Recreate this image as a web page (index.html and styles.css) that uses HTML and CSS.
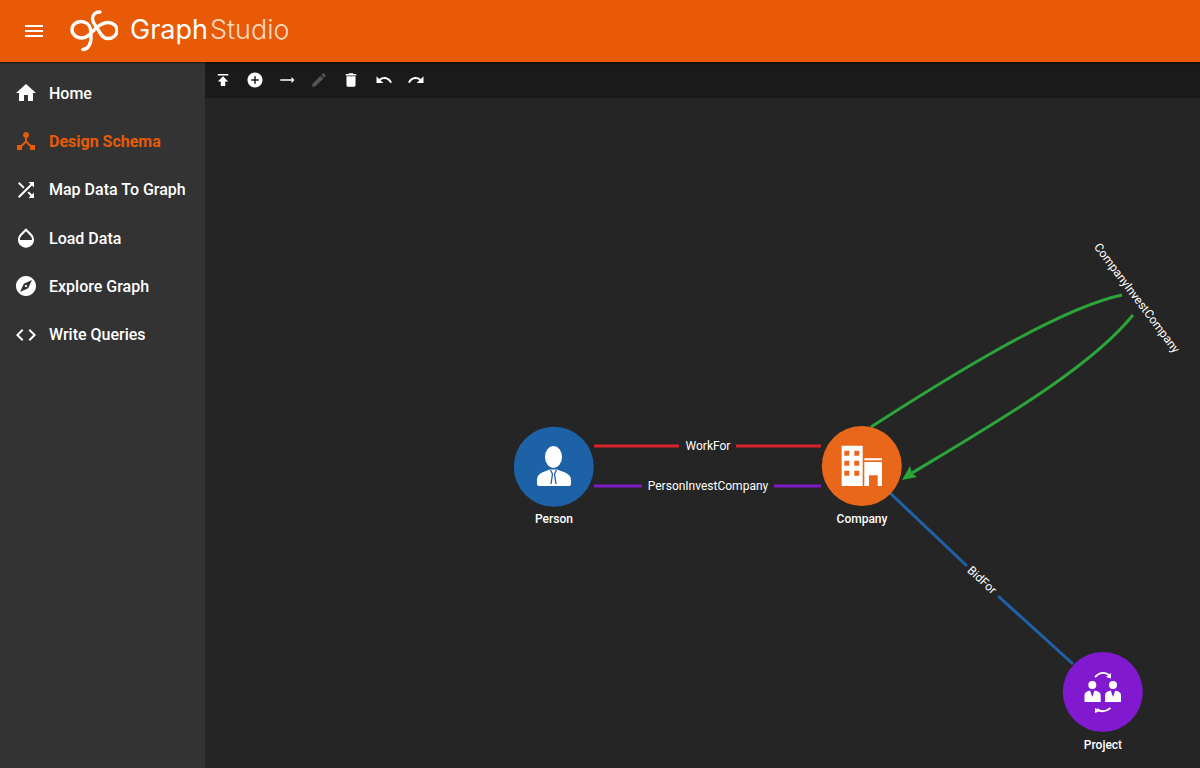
FILE: index.html
```html
<!DOCTYPE html>
<html lang="en">
<head>
    <meta charset="UTF-8">
    <meta name="viewport" content="width=device-width, initial-scale=1.0">
    <title>GraphStudio</title>
    <link rel="stylesheet" href="styles.css">
</head>
<body>
    <header class="topbar">
        <svg class="menu-icon" viewBox="0 0 24 24"><path d="M3 18h18v-2H3v2zm0-5h18v-2H3v2zm0-7v2h18V6H3z"/></svg>
        <svg class="logo" viewBox="70 8 48 42">
            <path d="M100 10C95 10 92.500 13 92.500 16.500C92.500 21 96 24 99 29C101 33 103 36.500 108 36.500C113 36.500 117 33 117 28.500C117 24 113 20.500 108 20.500C102 20.500 98 24 94 28C90 32 87 36 81.500 36C76 36 72 32 72 27.500C72 23 76 19.500 81 19.500C86 19.500 90 23 90.500 27C91 31 91.500 36 90.500 40C89.500 44 87 47 83 47.500"/>
        </svg>
        <div class="brand"><span class="brand-graph">Graph</span><span class="brand-studio">Studio</span></div>
    </header>
    <div class="layout">
        <nav class="sidenav">
            <a class="nav-item">
                <svg viewBox="0 0 24 24"><path d="M10 20v-6h4v6h5v-8h3L12 3 2 12h3v8z"/></svg>
                <span>Home</span>
            </a>
            <a class="nav-item active">
                <svg viewBox="0 0 24 24"><path d="M17 16l-4-4V8.82C14.16 8.4 15 7.3 15 6c0-1.66-1.34-3-3-3S9 4.34 9 6c0 1.3.84 2.4 2 2.82V12l-4 4H3v5h5v-3.05l4-4.2 4 4.2V21h5v-5h-4z"/></svg>
                <span>Design Schema</span>
            </a>
            <a class="nav-item">
                <svg viewBox="0 0 24 24"><path d="M10.59 9.17L5.41 4 4 5.41l5.17 5.17 1.42-1.41zM14.5 4l2.04 2.04L4 18.59 5.41 20 17.96 7.46 20 9.5V4h-5.5zm.33 9.41l-1.41 1.41 3.13 3.13L14.5 20H20v-5.5l-2.04 2.04-3.13-3.13z"/></svg>
                <span>Map Data To Graph</span>
            </a>
            <a class="nav-item">
                <svg viewBox="0 0 24 24"><path d="M17.66 8L12 2.35 6.34 8C4.78 9.56 4 11.64 4 13.64s.78 4.11 2.34 5.67 3.61 2.35 5.66 2.35 4.1-.79 5.66-2.35S20 15.64 20 13.64 19.22 9.56 17.66 8zM6 14c.01-2 .62-3.27 1.76-4.4L12 5.27l4.24 4.38C17.38 10.77 17.99 12 18 14H6z"/></svg>
                <span>Load Data</span>
            </a>
            <a class="nav-item">
                <svg viewBox="0 0 24 24"><path d="M12 10.9c-.61 0-1.1.49-1.1 1.1s.49 1.1 1.1 1.1c.61 0 1.1-.49 1.1-1.1s-.49-1.1-1.1-1.1zM12 2C6.48 2 2 6.48 2 12s4.48 10 10 10 10-4.48 10-10S17.52 2 12 2zm2.19 12.19L6 18l3.81-8.19L18 6l-3.81 8.19z"/></svg>
                <span>Explore Graph</span>
            </a>
            <a class="nav-item">
                <svg viewBox="0 0 24 24"><path d="M9.4 16.6L4.8 12l4.6-4.6L8 6l-6 6 6 6 1.4-1.4zm5.2 0l4.6-4.6-4.6-4.6L16 6l6 6-6 6-1.4-1.4z"/></svg>
                <span>Write Queries</span>
            </a>
        </nav>
        <main class="workspace">
            <div class="toolbar">
                <button class="tool"><svg viewBox="0 0 24 24"><path d="M5 4v2h14V4H5zm0 10h4v6h6v-6h4l-7-7-7 7z"/></svg></button>
                <button class="tool"><svg viewBox="0 0 24 24"><path d="M12 2C6.48 2 2 6.48 2 12s4.48 10 10 10 10-4.48 10-10S17.52 2 12 2zm5 11h-4v4h-2v-4H7v-2h4V7h2v4h4v2z"/></svg></button>
                <button class="tool"><svg viewBox="0 0 24 24"><path d="M22 12l-4-4v3H3v2h15v3z"/></svg></button>
                <button class="tool disabled"><svg viewBox="0 0 24 24"><path d="M3 17.25V21h3.75L17.81 9.94l-3.75-3.75L3 17.25zM20.71 7.04c.39-.39.39-1.02 0-1.41l-2.34-2.34c-.39-.39-1.02-.39-1.41 0l-1.83 1.83 3.75 3.75 1.83-1.83z"/></svg></button>
                <button class="tool"><svg viewBox="0 0 24 24"><path d="M6 19c0 1.1.9 2 2 2h8c1.1 0 2-.9 2-2V7H6v12zM19 4h-3.5l-1-1h-5l-1 1H5v2h14V4z"/></svg></button>
                <button class="tool"><svg viewBox="0 0 24 24"><path d="M12.5 8c-2.65 0-5.05.99-6.9 2.6L2 7v9h9l-3.62-3.62c1.39-1.16 3.16-1.88 5.12-1.88 3.54 0 6.55 2.31 7.6 5.5l2.37-.78C21.08 11.03 17.15 8 12.5 8z"/></svg></button>
                <button class="tool"><svg viewBox="0 0 24 24"><path d="M18.4 10.6C16.55 8.99 14.15 8 11.5 8c-4.65 0-8.58 3.03-9.96 7.22L3.9 16c1.05-3.19 4.05-5.5 7.6-5.5 1.95 0 3.73.72 5.12 1.88L13 16h9V7l-3.6 3.6z"/></svg></button>
            </div>
            <!-- viewBox uses page coordinates so the node positions read directly -->
            <svg class="graph" viewBox="205 98 995 670">
                <path class="edge edge-red" d="M594 446H679M736 446H821"/>
                <path class="edge edge-purple" d="M594 486H642M774 486H821"/>
                <path class="edge edge-blue" d="M890 493L967 566M998 596L1073 664"/>
                <path class="edge edge-green" d="M871 427C950 376 1060 308 1122 295"/>
                <path class="edge edge-green" d="M1133 315C1090 368 1000 420 912 473"/>
                <polygon class="arrow-green" points="902,480 910,466 912,473 917,477"/>

                <text class="edge-label" x="708" y="450">WorkFor</text>
                <text class="edge-label" x="708" y="490">PersonInvestCompany</text>
                <text class="edge-label" transform="translate(982 580) rotate(43)" y="4">BidFor</text>
                <text class="edge-label" transform="translate(1137 298) rotate(53)" y="4">CompanyInvestCompany</text>

                <g>
                    <circle class="node-blue" cx="553.800" cy="466.800" r="40"/>
                    <ellipse class="glyph" cx="553.500" cy="457" rx="8.500" ry="11"/>
                    <path class="glyph" d="M537 480C537 475 540 473 546 471L550 469.500H557L561 471C567 473 571 475 571 480V484Q571 486 568 486H540Q537 486 537 484Z"/>
                    <path class="tie-lines" d="M550.500 470L552.500 474L551 484M556.500 470L554.500 474L556 484"/>
                    <text class="node-label" x="554" y="523">Person</text>
                </g>
                <g>
                    <circle class="node-orange" cx="861.800" cy="466" r="40"/>
                    <path class="glyph" d="M841.700 445.700H862.700V486H841.700ZM844.300 450.700V455.700H849.300V450.700ZM854.300 450.700V455.700H859.300V450.700ZM844.300 460.700V465.700H849.300V460.700ZM854.300 460.700V465.700H859.300V460.700ZM844.300 470.700V475.700H849.300V470.700ZM854.300 470.700V475.700H859.300V470.700Z" fill-rule="evenodd"/>
                    <path class="glyph" d="M864.300 458.300H882V460.300H864.300ZM864.300 462H882V486H877.700V475.300H869V486H864.300Z"/>
                    <text class="node-label" x="862" y="523">Company</text>
                </g>
                <g>
                    <circle class="node-purple" cx="1102.800" cy="692" r="40"/>
                    <circle class="glyph" cx="1092.300" cy="685" r="4"/>
                    <circle class="glyph" cx="1113" cy="685" r="4"/>
                    <path class="glyph" d="M1084.500 702V695Q1084.500 692.500 1087 691.500L1090 690.500L1092.300 697L1094.500 690.500L1098 691.500Q1100.700 692.500 1100.700 695V702Z"/>
                    <path class="glyph" d="M1105 702V695Q1105 692.500 1107.500 691.500L1110.800 690.500L1113 697L1115.200 690.500L1118.500 691.500Q1121 692.500 1121 695V702Z"/>
                    <path class="arc" d="M1095 677Q1102 670 1109 675"/>
                    <path class="arc" d="M1110.500 708Q1103 714 1097 709"/>
                    <polygon class="glyph" points="1111,673 1111,678.500 1106,677"/>
                    <polygon class="glyph" points="1095,708 1095,713 1100,711"/>
                    <text class="node-label" x="1103" y="749">Project</text>
                </g>
            </svg>
        </main>
    </div>
</body>
</html>
```

FILE: styles.css
```css
html, body {
    height: 100%;
}
body {
    margin: 0;
    display: flex;
    flex-direction: column;
    overflow: hidden;
    font-family: Roboto, sans-serif;
    background-color: #252525;
    color: #fff;
}
.topbar {
    height: 62px;
    flex: none;
    display: flex;
    align-items: center;
    padding-left: 22px;
    background-color: #e85a06;
    box-shadow: 0 1px 2px rgba(0, 0, 0, 0.5);
    position: relative;
    z-index: 1;
}
.menu-icon {
    width: 24px;
    height: 24px;
    fill: #fff;
}
.logo {
    width: 48px;
    height: 42px;
    margin-left: 24px;
    fill: none;
    stroke: #fff;
    stroke-width: 3.4;
    stroke-linecap: round;
}
.brand {
    margin-left: 12px;
    padding-bottom: 3px;
    font-family: Inter, sans-serif;
    font-size: 27px;
}
.brand-graph {
    font-weight: 400;
}
.brand-studio {
    margin-left: 2px;
    font-weight: 300;
    color: #fbd9c0;
}
.layout {
    flex: 1;
    display: flex;
    min-height: 0;
}
.sidenav {
    width: 205px;
    flex: none;
    padding-top: 7px;
    background-color: #333;
}
.nav-item {
    height: 48.3px;
    display: flex;
    align-items: center;
    padding-left: 14px;
    font-size: 16px;
    font-weight: 500;
    color: #fff;
}
.nav-item svg {
    width: 24px;
    height: 24px;
    margin-right: 11px;
    fill: #fff;
}
.nav-item.active {
    color: #e85a06;
    font-weight: 700;
}
.nav-item.active svg {
    fill: #e85a06;
}
.workspace {
    flex: 1;
    display: flex;
    flex-direction: column;
    min-width: 0;
}
.toolbar {
    height: 36px;
    flex: none;
    display: flex;
    align-items: center;
    padding-left: 2px;
    background-color: #1a1a1a;
}
.tool {
    width: 32.1px;
    height: 32px;
    padding: 0;
    display: flex;
    align-items: center;
    justify-content: center;
    border: none;
    background: transparent;
}
.tool svg {
    width: 18px;
    height: 18px;
    fill: #fff;
}
.tool.disabled svg {
    fill: #555;
}
.graph {
    flex: 1;
    display: block;
    min-height: 0;
    font-family: Roboto, sans-serif;
}
.edge {
    fill: none;
    stroke-width: 3;
}
.edge-red { stroke: #d9222a; }
.edge-purple { stroke: #7d1bc4; }
.edge-blue { stroke: #1f62a8; }
.edge-green { stroke: #2ba53a; }
.arrow-green { fill: #2ba53a; }
.edge-label {
    font-size: 12px;
    fill: #fff;
    text-anchor: middle;
}
.node-label {
    font-size: 12px;
    font-weight: 500;
    fill: #fff;
    text-anchor: middle;
}
.node-blue { fill: #1d62a6; }
.node-orange { fill: #e8671b; }
.node-purple { fill: #8019cf; }
.glyph { fill: #fff; }
.tie-lines {
    fill: none;
    stroke: #1d62a6;
    stroke-width: 1.3;
}
.arc {
    fill: none;
    stroke: #fff;
    stroke-width: 1.8;
}
```
